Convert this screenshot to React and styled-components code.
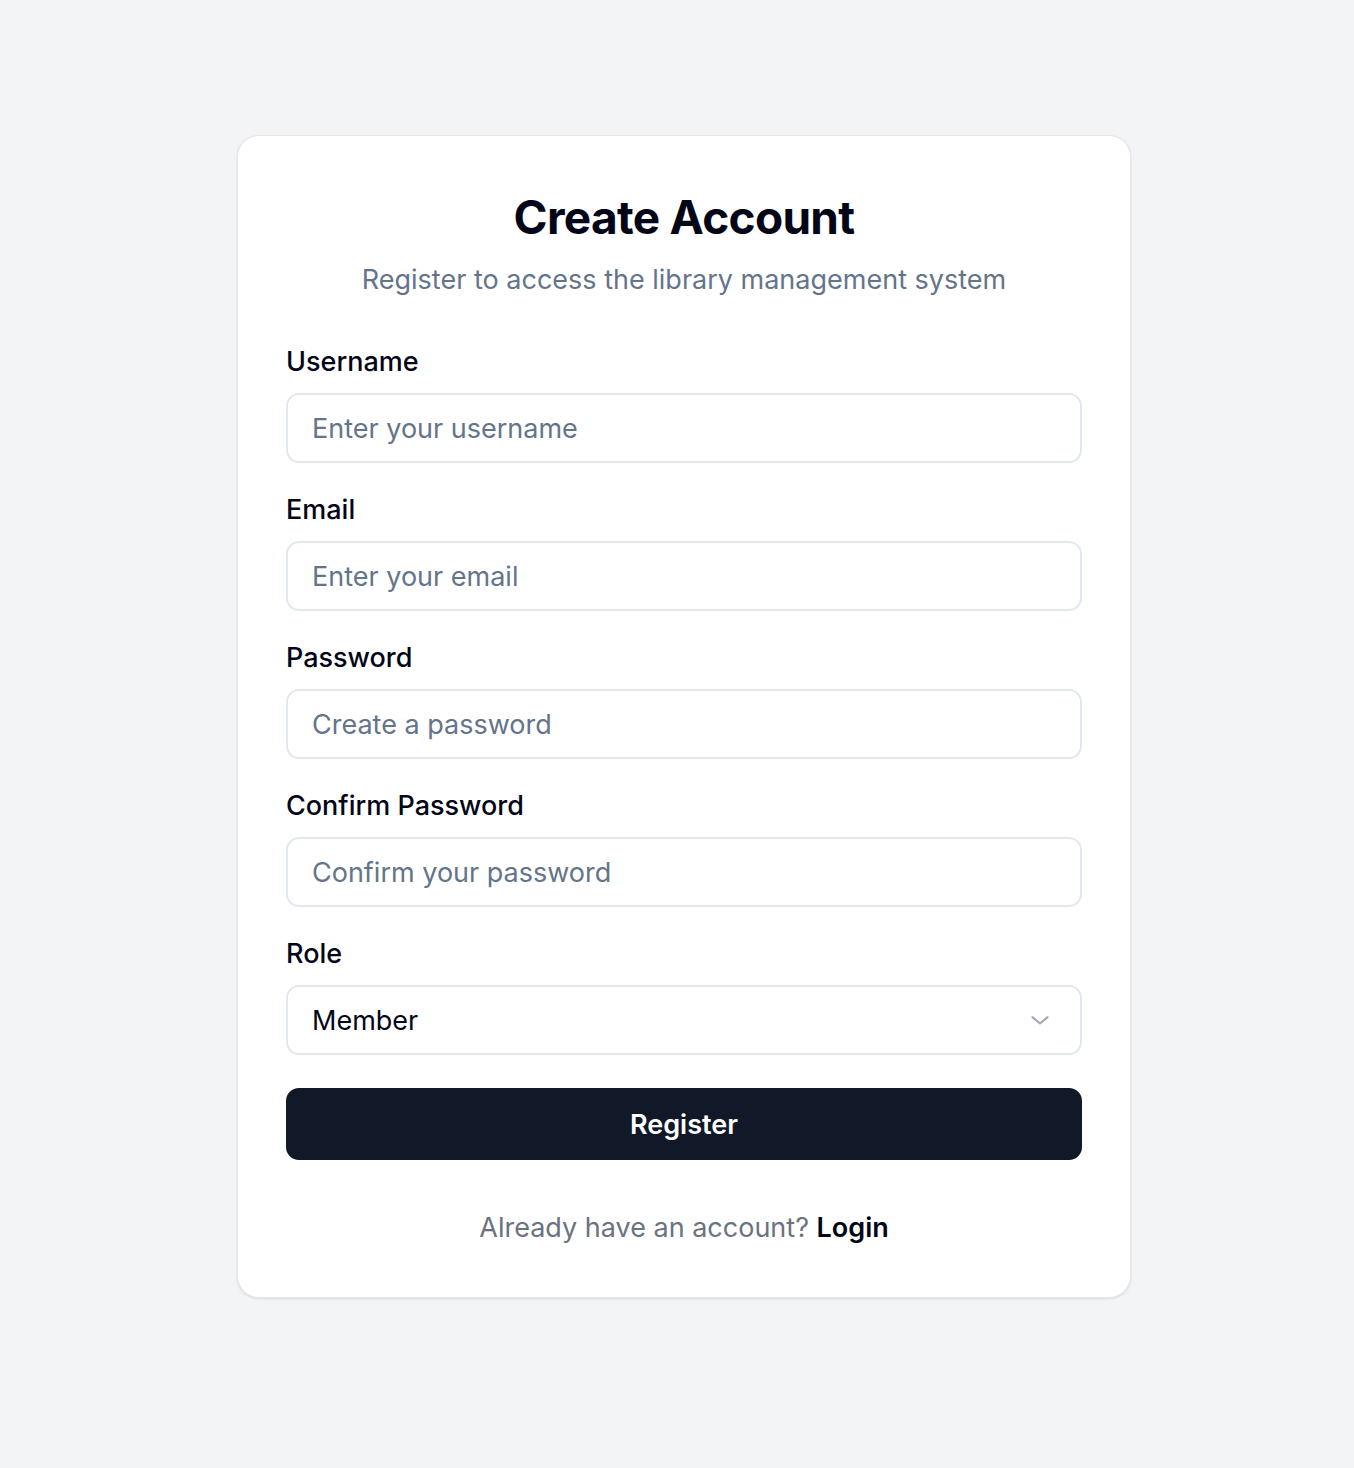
import React from "react"
import styled, { createGlobalStyle } from "styled-components"

const GlobalStyle = createGlobalStyle`
  * { box-sizing: border-box; }
  body {
    margin: 0;
    background: #f3f4f6;
    font-family: Inter, "Noto Sans", "Liberation Sans", sans-serif;
    color: #0f172a;
  }
`

const Page = styled.div`
  min-height: 1468px;
  display: flex;
  justify-content: center;
  align-items: flex-start;
  padding: 135px 0 0 14px;
`

const Card = styled.div`
  width: 894px;
  background: #ffffff;
  border: 1px solid #e5e7eb;
  border-radius: 22px;
  box-shadow: 0 1px 3px rgba(15, 23, 42, 0.08), 0 1px 2px rgba(15, 23, 42, 0.04);
  padding: 53px 48px 51px;
  display: flex;
  flex-direction: column;
`

const Title = styled.h1`
  margin: 0;
  text-align: center;
  font-size: 46px;
  line-height: 56px;
  font-weight: 700;
  letter-spacing: -0.7px;
  color: #020617;
`

const Subtitle = styled.p`
  margin: 17px 0 0;
  text-align: center;
  font-size: 27px;
  line-height: 36px;
  color: #64748b;
`

const Form = styled.form`
  margin-top: 46px;
  display: flex;
  flex-direction: column;
`

const Field = styled.div`
  display: flex;
  flex-direction: column;
  gap: 13px;
  margin-bottom: 29px;
  &:last-of-type { margin-bottom: 0; }
`

const Label = styled.label`
  font-size: 27px;
  line-height: 36px;
  font-weight: 500;
  color: #020617;
`

const Input = styled.input`
  height: 70px;
  width: 100%;
  border: 2px solid #e2e8f0;
  border-radius: 13px;
  padding: 0 24px;
  font-family: inherit;
  font-size: 27px;
  color: #020617;
  background: #fff;
  outline: none;
  &::placeholder { color: #64748b; }
`

const SelectBox = styled.div`
  height: 70px;
  border: 2px solid #e2e8f0;
  border-radius: 13px;
  display: flex;
  align-items: center;
  justify-content: space-between;
  padding: 0 24px;
  font-size: 27px;
  color: #020617;
`

const Chevron = styled.svg`
  width: 28px;
  height: 28px;
  margin-right: 2px;
`

const Button = styled.button`
  margin-top: 33px;
  height: 72px;
  width: 100%;
  border: none;
  border-radius: 13px;
  background: #111827;
  color: #fff;
  font-family: inherit;
  font-size: 27px;
  font-weight: 600;
  cursor: pointer;
`

const Footer = styled.p`
  margin: 50px 0 0;
  text-align: center;
  font-size: 27px;
  line-height: 36px;
  color: #6b7280;
`

const LoginLink = styled.a`
  color: #020617;
  font-weight: 600;
  text-decoration: none;
`

const fields = [
  { label: "Username", placeholder: "Enter your username", type: "text" },
  { label: "Email", placeholder: "Enter your email", type: "email" },
  { label: "Password", placeholder: "Create a password", type: "password" },
  { label: "Confirm Password", placeholder: "Confirm your password", type: "password" },
]

export default function App() {
  return (
    <>
      <GlobalStyle />
      <Page>
        <Card>
          <Title>Create Account</Title>
          <Subtitle>Register to access the library management system</Subtitle>
          <Form onSubmit={(e) => e.preventDefault()}>
            {fields.map((f) => (
              <Field key={f.label}>
                <Label>{f.label}</Label>
                <Input type={f.type} placeholder={f.placeholder} />
              </Field>
            ))}
            <Field>
              <Label>Role</Label>
              <SelectBox>
                <span>Member</span>
                <Chevron viewBox="0 0 24 24" fill="none" stroke="#a3a9b8" strokeWidth="1.8" strokeLinecap="round" strokeLinejoin="round">
                  <path d="M5.5 9.5l6.5 5.5 6.5-5.5" />
                </Chevron>
              </SelectBox>
            </Field>
            <Button type="submit">Register</Button>
          </Form>
          <Footer>
            Already have an account? <LoginLink href="#">Login</LoginLink>
          </Footer>
        </Card>
      </Page>
    </>
  )
}
